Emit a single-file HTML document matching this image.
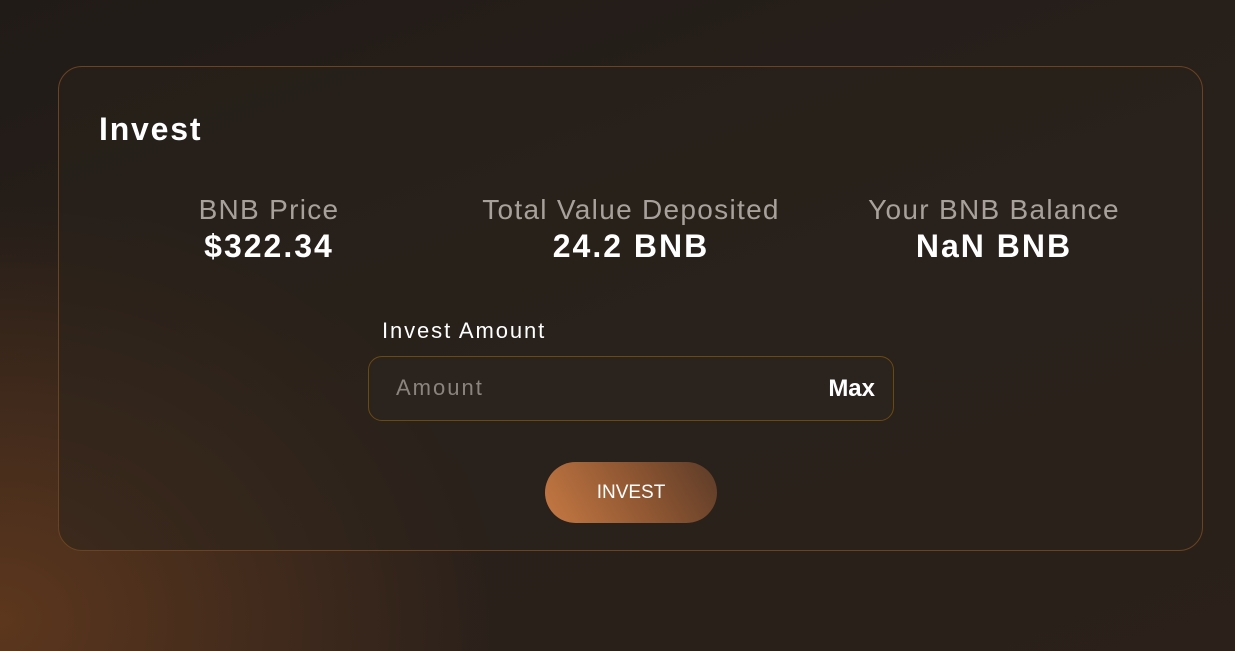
<!DOCTYPE html>
<html><head><style>
*{margin:0;padding:0;box-sizing:border-box}
body{width:1235px;height:651px;overflow:hidden;font-family:"Liberation Sans",sans-serif;
background:radial-gradient(ellipse 500px 420px at 0px 620px,rgba(110,62,30,0.75),rgba(0,0,0,0) 100%),linear-gradient(160deg,#211b17 0%,#28201b 50%,#2b201a 100%);position:relative}
.card{position:absolute;left:58px;top:66px;width:1145px;height:485px;border:1px solid #6b4320;border-radius:24px;background:rgba(42,34,28,0.55)}
h1{position:absolute;left:40px;top:44px;font-size:32px;font-weight:bold;color:#fff;letter-spacing:1.8px}
.stat{position:absolute;top:127px;text-align:center;width:340px}
.stat .l{font-size:28px;color:#a8a09a;line-height:32px;letter-spacing:1.3px}
.stat .v{font-size:32px;font-weight:bold;color:#fff;line-height:40px;letter-spacing:2px}
.lab{position:absolute;left:323px;top:251px;font-size:22px;color:#fff;letter-spacing:1.9px}
.inp{position:absolute;left:309px;top:289px;width:526px;height:65px;border:1px solid #6b4a10;border-radius:14px;background:#2b231e}
.inp .p{position:absolute;left:27px;top:18px;font-size:22px;color:#8b847e;letter-spacing:2px}
.inp .m{position:absolute;right:18px;top:18px;font-size:24px;font-weight:bold;color:#fff}
.btn{position:absolute;left:486px;top:395px;width:172px;height:61px;border-radius:31px;background:linear-gradient(60deg,#c67943,#8e5632 55%,#5c3b28);color:#fff;font-size:19px;text-align:center;line-height:61px}
</style></head><body>
<div class="card">
<h1>Invest</h1>
<div class="stat" style="left:40px"><div class="l">BNB Price</div><div class="v">$322.34</div></div>
<div class="stat" style="left:402px"><div class="l">Total Value Deposited</div><div class="v">24.2 BNB</div></div>
<div class="stat" style="left:765px"><div class="l">Your BNB Balance</div><div class="v">NaN BNB</div></div>
<div class="lab">Invest Amount</div>
<div class="inp"><span class="p">Amount</span><span class="m">Max</span></div>
<div class="btn">INVEST</div>
</div>
</body></html>
